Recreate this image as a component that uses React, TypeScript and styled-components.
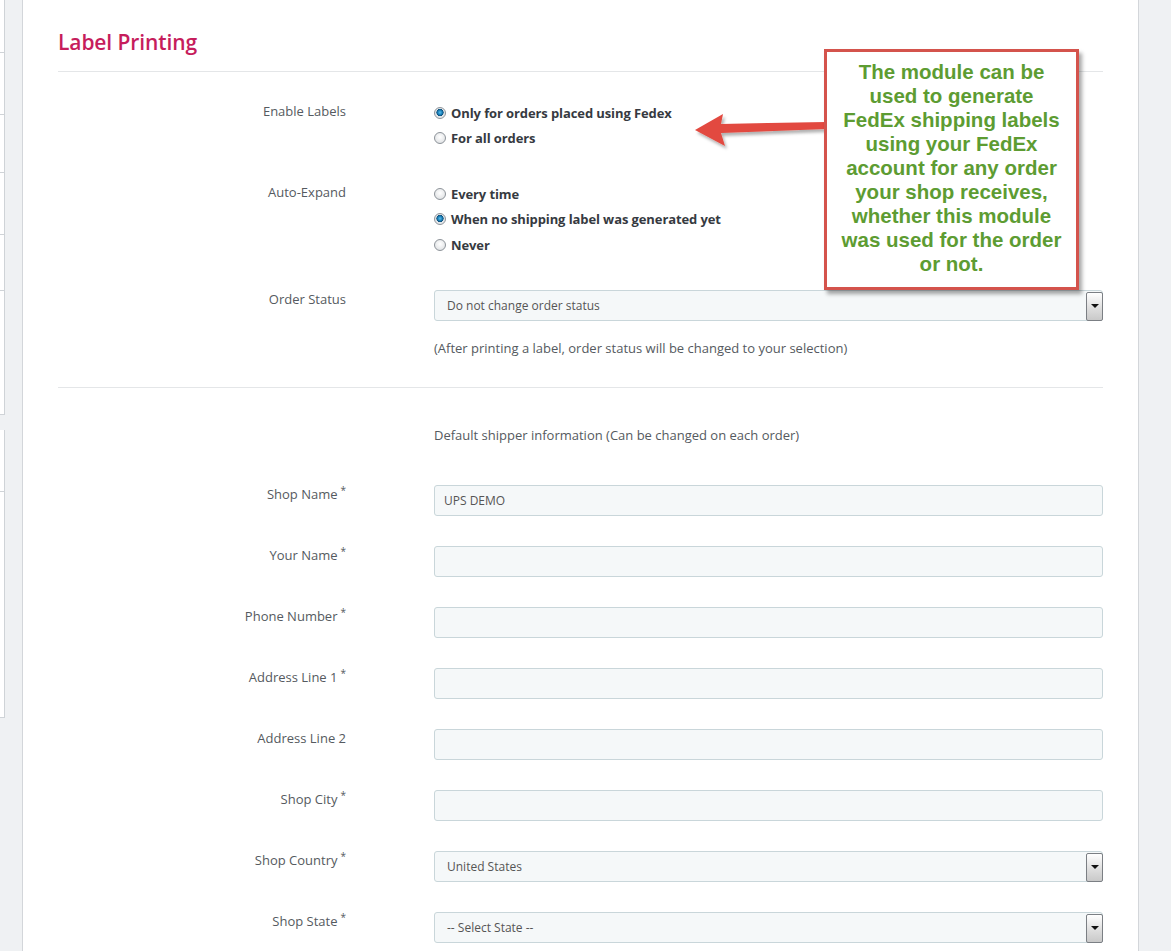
import React from "react";
import styled, { createGlobalStyle } from "styled-components";

const Global = createGlobalStyle`
  html, body { margin: 0; padding: 0; background: #eff1f3; }
  body { font-family: "Open Sans", "Liberation Sans", sans-serif; color: #555; }
  * { box-sizing: border-box; }
`;

const Page = styled.div`
  display: flex;
  min-height: 100vh;
  align-items: stretch;
`;

const LeftRail = styled.div`
  width: 23px;
  flex: none;
  background: #eff1f3;
  border-right: 1px solid #d3d6da;
  display: flex;
  flex-direction: column;
`;

const RailBox = styled.div<{ $h: number; $gap: number }>`
  width: 5px;
  height: ${(p) => p.$h}px;
  margin-bottom: ${(p) => p.$gap}px;
  background: #fff;
  border-right: 1px solid #cfd3d7;
  border-bottom: 1px solid #cfd3d7;
`;

const Main = styled.main`
  flex: 1;
  background: #fff;
  padding: 29px 35px 40px 35px;
  position: relative;
`;

const RightRail = styled.div`
  width: 33px;
  flex: none;
  background: #eff1f3;
  border-left: 1px solid #d3d6da;
`;

const Title = styled.h2`
  margin: 0;
  font-size: 21px;
  line-height: 26px;
  font-weight: 600;
  color: #c61d5c;
  letter-spacing: -0.1px;
`;

const Rule = styled.hr<{ $top: number; $bottom: number }>`
  border: 0;
  border-top: 1px solid #e4e6e8;
  margin: ${(p) => p.$top}px 0 ${(p) => p.$bottom}px;
`;

const Row = styled.div<{ $mb: number }>`
  display: grid;
  grid-template-columns: 288px 1fr;
  column-gap: 88px;
  align-items: start;
  margin-bottom: ${(p) => p.$mb}px;
`;

const Label = styled.div<{ $pt?: number }>`
  text-align: right;
  font-size: 13px;
  line-height: 18px;
  color: #555a60;
  padding-top: ${(p) => p.$pt ?? 0}px;
`;

const Req = styled.span`
  font-size: 10px;
  line-height: 0;
  margin-left: 3px;
  position: relative;
  top: -5px;
`;

const RadioList = styled.div`
  display: flex;
  flex-direction: column;
`;

const RadioLine = styled.label`
  display: flex;
  align-items: center;
  height: 25.5px;
  font-size: 13px;
  font-weight: 700;
  color: #363a41;
  letter-spacing: -0.1px;
`;

const RadioDot = styled.span<{ $on?: boolean }>`
  width: 12px;
  height: 12px;
  border-radius: 50%;
  border: 1px solid #8d9399;
  background: ${(p) =>
    p.$on
      ? "radial-gradient(circle at 50% 45%, #5bc0f0 0, #1a7fb8 2.2px, #0d4f7a 3.4px, #dfe3e6 3.8px, #f7f8f9 100%)"
      : "radial-gradient(circle at 50% 40%, #ffffff 0, #e4e6e8 70%, #cfd2d5 100%)"};
  margin-right: 5px;
  flex: none;
`;

const Field = styled.div`
  height: 31px;
  background: #f5f8f9;
  border: 1px solid #c9d6da;
  border-radius: 3px;
  font-size: 12px;
  color: #555;
  display: flex;
  align-items: center;
  padding-left: 9px;
`;

const SelectBox = styled(Field)`
  padding-left: 12px;
  justify-content: space-between;
  padding-right: 0;
`;

const DropButton = styled.span`
  width: 17px;
  height: 29px;
  border: 1px solid #7b7f84;
  border-radius: 2px;
  background: linear-gradient(#ffffff, #dcdcdc 60%, #c9c9c9);
  display: flex;
  align-items: center;
  justify-content: center;
  margin-right: -1px;
  margin-top: -1px;
  margin-bottom: -3px;
  &::after {
    content: "";
    border-left: 4px solid transparent;
    border-right: 4px solid transparent;
    border-top: 4px solid #111;
  }
`;

const Help = styled.p`
  margin: 17px 0 0;
  font-size: 13px;
  line-height: 20px;
  color: #555a60;
`;

const Note = styled.p`
  margin: 0;
  font-size: 13px;
  line-height: 20px;
  color: #555a60;
`;

const Callout = styled.div`
  position: absolute;
  left: 801px;
  top: 49px;
  width: 255px;
  height: 241px;
  background: #fff;
  border: 3px solid #d4534c;
  box-shadow: 3px 4px 4px rgba(0, 0, 0, 0.35);
  font-family: "Liberation Sans", Arial, sans-serif;
  font-weight: 700;
  font-size: 20.5px;
  line-height: 24px;
  color: #5d9c32;
  text-align: center;
  padding-top: 8px;
  white-space: nowrap;
`;

const Arrow = styled.svg`
  position: absolute;
  left: 667px;
  top: 105px;
  overflow: visible;
`;

type FieldDef = { label: string; req?: boolean; value?: string; select?: boolean };

const fields: FieldDef[] = [
  { label: "Shop Name", req: true, value: "UPS DEMO" },
  { label: "Your Name", req: true },
  { label: "Phone Number", req: true },
  { label: "Address Line 1", req: true },
  { label: "Address Line 2" },
  { label: "Shop City", req: true },
  { label: "Shop Country", req: true, value: "United States", select: true },
  { label: "Shop State", req: true, value: "-- Select State --", select: true },
];

const railBoxes = [
  { h: 53, gap: 0 },
  { h: 62, gap: 0 },
  { h: 58, gap: 0 },
  { h: 62, gap: 0 },
  { h: 56, gap: 0 },
  { h: 124, gap: 15 },
  { h: 62, gap: 0 },
  { h: 226, gap: 8 },
];

export default function App() {
  return (
    <>
      <Global />
      <Page>
        <LeftRail>
          {railBoxes.map((b, i) => (
            <RailBox key={i} $h={b.h} $gap={b.gap} />
          ))}
        </LeftRail>
        <Main>
          <Title>Label Printing</Title>
          <Rule $top={16} $bottom={28} />

          <Row $mb={30}>
            <Label $pt={2}>Enable Labels</Label>
            <RadioList>
              <RadioLine>
                <RadioDot $on />
                Only for orders placed using Fedex
              </RadioLine>
              <RadioLine>
                <RadioDot />
                For all orders
              </RadioLine>
            </RadioList>
          </Row>

          <Row $mb={32}>
            <Label $pt={2}>Auto-Expand</Label>
            <RadioList>
              <RadioLine>
                <RadioDot />
                Every time
              </RadioLine>
              <RadioLine>
                <RadioDot $on />
                When no shipping label was generated yet
              </RadioLine>
              <RadioLine>
                <RadioDot />
                Never
              </RadioLine>
            </RadioList>
          </Row>

          <Row $mb={0}>
            <Label>Order Status</Label>
            <div>
              <SelectBox>
                Do not change order status
                <DropButton />
              </SelectBox>
              <Help>(After printing a label, order status will be changed to your selection)</Help>
            </div>
          </Row>

          <Rule $top={29} $bottom={37} />

          <Row $mb={40}>
            <div />
            <Note>Default shipper information (Can be changed on each order)</Note>
          </Row>

          {fields.map((f) => (
            <Row $mb={30} key={f.label}>
              <Label>
                {f.label}
                {f.req && <Req>*</Req>}
              </Label>
              {f.select ? (
                <SelectBox>
                  {f.value}
                  <DropButton />
                </SelectBox>
              ) : (
                <Field>{f.value}</Field>
              )}
            </Row>
          ))}

          <Arrow width="140" height="44" viewBox="0 0 140 44">
            <defs>
              <filter id="ash" x="-10%" y="-30%" width="130%" height="170%">
                <feDropShadow dx="2" dy="3" stdDeviation="1.5" floodColor="#000" floodOpacity="0.3" />
              </filter>
            </defs>
            <polygon
              points="5,25 33,9 31,19 136,17 136,24 31,28 35,41"
              fill="#e2493f"
              filter="url(#ash)"
            />
          </Arrow>

          <Callout>
            The module can be
            <br />
            used to generate
            <br />
            FedEx shipping labels
            <br />
            using your FedEx
            <br />
            account for any order
            <br />
            your shop receives,
            <br />
            whether this module
            <br />
            was used for the order
            <br />
            or not.
          </Callout>
        </Main>
        <RightRail />
      </Page>
    </>
  );
}
